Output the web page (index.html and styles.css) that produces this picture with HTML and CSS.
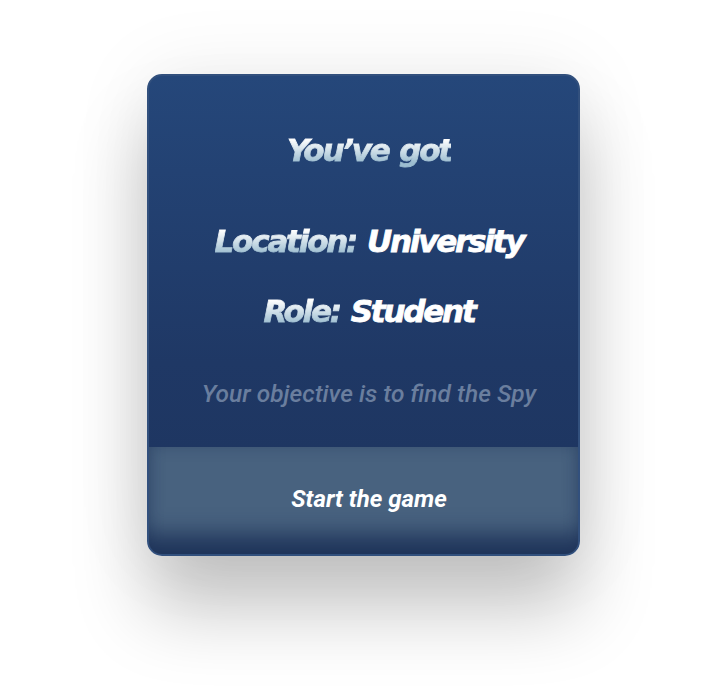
FILE: index.html
```html
<!DOCTYPE html>
<html>
<head>
<meta charset="utf-8">
<link rel="stylesheet" href="styles.css">
</head>
<body>
<div class="stage">
  <div class="card">
    <div class="content">
      <div class="title"><span class="grad">You’ve got</span></div>
      <div class="line loc"><span class="grad">Location:</span> <span class="val">University</span></div>
      <div class="line role"><span class="grad">Role:</span> <span class="val">Student</span></div>
      <div class="objective">Your objective is to find the Spy</div>
    </div>
    <div class="button">Start the game</div>
  </div>
</div>
</body>
</html>
```
FILE: styles.css
```css
html, body {
  margin: 0;
  padding: 0;
  background: #ffffff;
}
.stage {
  width: 727px;
  height: 691px;
  display: flex;
  justify-content: center;
  padding-top: 74px;
  box-sizing: border-box;
}
.card {
  width: 433px;
  height: 482px;
  box-sizing: border-box;
  border: 2px solid #32507d;
  border-radius: 15px;
  overflow: hidden;
  background: linear-gradient(180deg, #25477a 0%, #1f3865 60%, #1d345e 100%);
  box-shadow: 0 55px 75px rgba(0, 0, 0, 0.22), 0 0 80px rgba(0, 0, 0, 0.08);
  display: flex;
  flex-direction: column;
}
.content {
  flex: 1;
  display: flex;
  flex-direction: column;
  align-items: center;
  padding-top: 54px;
  padding-left: 11px;
}
.title, .line {
  font-family: "DejaVu Sans", sans-serif;
  font-weight: 700;
  font-style: italic;
  font-size: 31px;
  line-height: 40px;
  letter-spacing: -2.2px;
  word-spacing: 2px;
  color: #ffffff;
}
.loc { margin-top: 51px; }
.role { margin-top: 30px; }
.grad {
  background: linear-gradient(180deg, #ffffff 20%, #9cbdd0 85%);
  -webkit-background-clip: text;
  background-clip: text;
  color: transparent;
  -webkit-text-stroke: 0.8px transparent;
}
.val {
  color: #ffffff;
  -webkit-text-stroke: 0.8px #ffffff;
}
.objective {
  margin-top: 48px;
  font-family: "Roboto", sans-serif;
  font-style: italic;
  font-weight: 500;
  font-size: 24.5px;
  line-height: 30px;
  color: #6a7e9e;
}
.button {
  height: 107px;
  flex: none;
  display: flex;
  align-items: center;
  justify-content: center;
  padding-bottom: 3px;
  padding-left: 11px;
  box-sizing: border-box;
  background: #48627f;
  box-shadow: inset 0 -30px 22px -10px rgba(20, 40, 80, 0.75), inset 0 0 14px rgba(30, 50, 90, 0.35);
  font-family: "Roboto", sans-serif;
  font-style: italic;
  font-weight: 700;
  font-size: 24px;
  color: #ffffff;
}
```
